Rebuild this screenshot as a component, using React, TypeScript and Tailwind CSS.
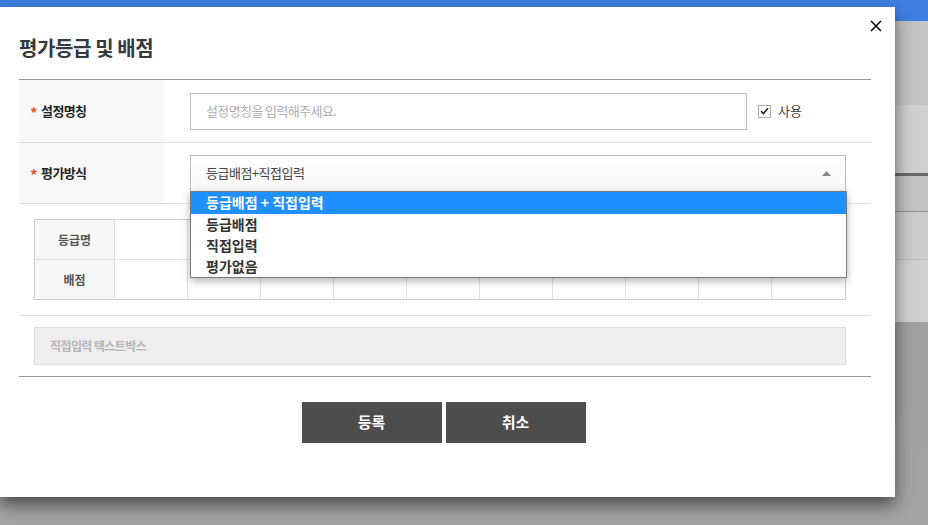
import React from "react";

const FONT = { fontFamily: '"Noto Sans CJK KR", "Noto Sans", sans-serif' };

const options = ["등급배점 + 직접입력", "등급배점", "직접입력", "평가없음"];

function Star() {
  return <span className="mr-[4px] mt-[3px] text-[15px] font-bold leading-none text-[#e4572e]">*</span>;
}

function Backdrop() {
  // the dimmed page behind the modal
  return (
    <div className="flex h-full w-full flex-col">
      <div className="h-[21px] bg-[#3f7fe2]" />
      <div className="h-[84px] bg-gradient-to-r from-[#a9a9a9] to-[#c4c4c4]" />
      <div className="h-[68px] bg-[#d0d0d0]" />
      <div className="h-[3px] bg-[#6a6a6a]" />
      <div className="h-[35px] bg-[#c2c2c2]" />
      <div className="h-[1px] bg-[#8f8f8f]" />
      <div className="h-[47px] bg-[#cbcbcb]" />
      <div className="h-[1px] bg-[#b9b9b9]" />
      <div className="h-[62px] bg-[#d1d1d1]" />
      <div className="flex-1 bg-gradient-to-b from-[#a0a0a0] to-[#a4a4a4]" />
    </div>
  );
}

export default function App() {
  return (
    <div className="relative h-[525px] w-[928px] overflow-hidden" style={FONT}>
      <Backdrop />

      <div className="absolute left-0 top-[7px] h-[490px] w-[895px] bg-white pl-[19px] pr-[24px] shadow-[0_8px_16px_rgba(0,0,0,0.55)]">
        <button className="absolute right-[13px] top-[13px] flex h-[12px] w-[12px] items-center justify-center">
          <svg width="12" height="12" viewBox="0 0 12 12">
            <path d="M1 1L11 11M11 1L1 11" stroke="#111" strokeWidth="1.6" />
          </svg>
        </button>

        <h2 className="pb-[18px] pt-[28px] text-[20px] font-bold leading-[26px] tracking-[-0.4px] text-[#343840]">
          평가등급 및 배점
        </h2>

        <div className="border-t border-[#9a9a9a]">
          {/* 설정명칭 */}
          <div className="flex h-[63px] items-stretch border-b border-[#dedede]">
            <div className="flex w-[145px] items-center bg-[#f8f8f8] pl-[11px] text-[13px] font-bold tracking-[-0.6px] text-[#222]">
              <Star />
              설정명칭
            </div>
            <div className="flex flex-1 items-center pl-[26px]">
              <div className="flex h-[37px] w-[557px] items-center border border-[#bdbdbd] pl-[15px] text-[13px] tracking-[-0.6px] text-[#b0b0b0]">
                설정명칭을 입력해주세요.
              </div>
              <label className="ml-[11px] flex items-center gap-[7px] text-[13px] text-[#444]">
                <span className="flex h-[13px] w-[13px] items-center justify-center border border-[#aaa] bg-white">
                  <svg width="9" height="8" viewBox="0 0 9 8">
                    <path d="M1 4.2L3.4 6.5L8 1.2" fill="none" stroke="#222" strokeWidth="1.6" />
                  </svg>
                </span>
                사용
              </label>
            </div>
          </div>

          {/* 평가방식 */}
          <div className="flex h-[61px] items-stretch border-b border-[#dedede]">
            <div className="flex w-[145px] items-center bg-[#f8f8f8] pl-[11px] text-[13px] font-bold tracking-[-0.6px] text-[#222]">
              <Star />
              평가방식
            </div>
            <div className="flex flex-1 items-center pl-[26px]">
              <div className="relative flex h-[37px] w-[656px] items-center justify-between border border-[#bdbdbd] bg-gradient-to-b from-white to-[#f7f7f7] pl-[15px] pr-[14px] text-[13px] tracking-[-0.5px] text-[#444]">
                등급배점+직접입력
                <svg width="9" height="5" viewBox="0 0 9 5">
                  <path d="M0 5L4.5 0L9 5Z" fill="#8a8a8a" />
                </svg>

                <ul className="absolute left-[-1px] top-full z-10 w-[657px] border border-[#7a7a7a] bg-white tracking-[0px] shadow-[0_3px_8px_rgba(0,0,0,0.3)]">
                  {options.map((o, i) => (
                    <li
                      key={o}
                      className={
                        i === 0
                          ? "flex h-[22px] items-center bg-[#1e90ff] pl-[15px] text-[14px] font-bold text-white"
                          : "flex h-[21px] items-center pl-[15px] text-[14px] font-bold text-[#333]"
                      }
                    >
                      {o}
                    </li>
                  ))}
                </ul>
              </div>
            </div>
          </div>

          {/* 등급 테이블 */}
          <div className="border-b border-[#dedede] pb-[15px] pl-[15px] pt-[15px]">
            <div className="grid w-[812px] grid-cols-[80px_repeat(10,1fr)] border border-[#cccccc]">
              {["등급명", "배점"].map((row, r) => (
                <React.Fragment key={row}>
                  <div
                    className={
                      r === 0
                        ? "flex h-[40px] items-center justify-center border-b border-r border-[#dddddd] bg-[#f7f7f7] text-[12px] font-bold text-[#555]"
                        : "flex h-[39px] items-center justify-center border-r border-[#dddddd] bg-[#f7f7f7] text-[12px] font-bold text-[#555]"
                    }
                  >
                    {row}
                  </div>
                  {Array.from({ length: 10 }).map((_, c) => (
                    <div
                      key={c}
                      className={
                        (r === 0 ? "h-[40px] border-b " : "h-[39px] ") +
                        (c < 9 ? "border-r border-[#e2e2e2]" : "border-[#e2e2e2]")
                      }
                    />
                  ))}
                </React.Fragment>
              ))}
            </div>
          </div>

          {/* 직접입력 */}
          <div className="border-b border-[#9a9a9a] pb-[11px] pl-[15px] pt-[11px]">
            <div className="flex h-[38px] w-[812px] items-center border border-[#dcdcdc] bg-[#eeeeee] pl-[15px] text-[12px] font-bold tracking-[-0.6px] text-[#b4b4b4]">
              직접입력 텍스트박스
            </div>
          </div>
        </div>

        <div className="mt-[25px] flex justify-center gap-[4px] pr-[3px]">
          <button className="h-[41px] w-[140px] bg-[#4d4d4d] text-[15px] font-bold text-white">등록</button>
          <button className="h-[41px] w-[140px] bg-[#4d4d4d] text-[15px] font-bold text-white">취소</button>
        </div>
      </div>
    </div>
  );
}
